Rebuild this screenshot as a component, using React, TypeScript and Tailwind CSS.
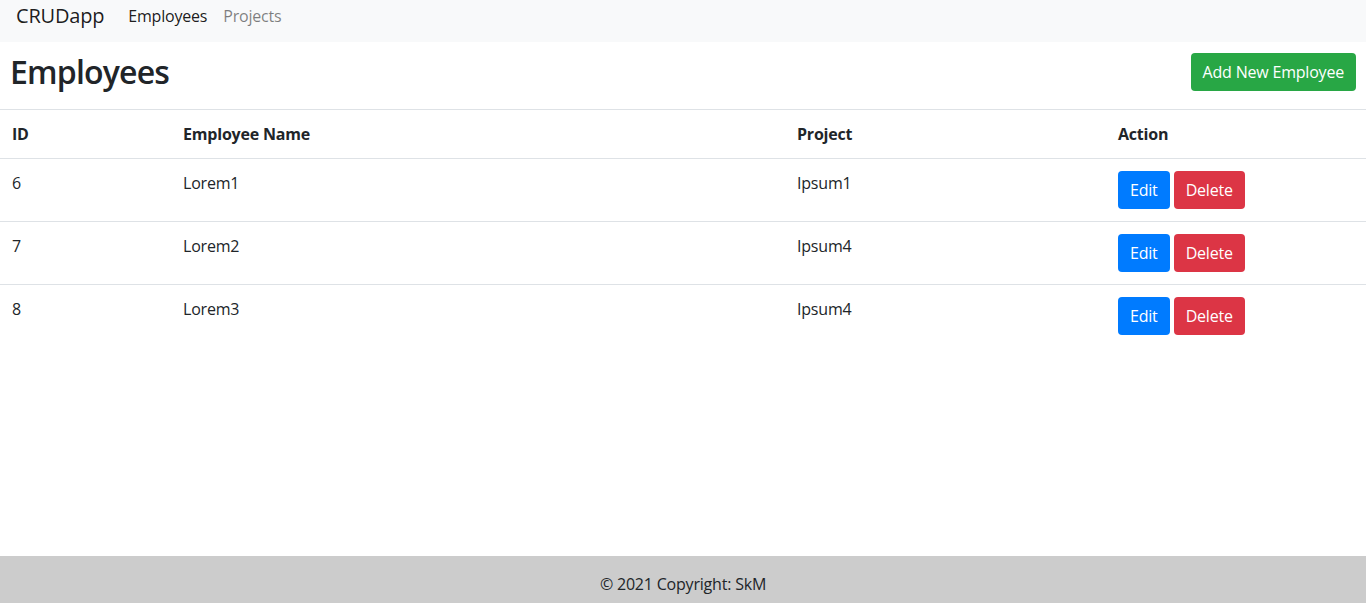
import React from "react";

interface Employee {
    id: number;
    name: string;
    project: string;
}

const employees: Employee[] = [
    { id: 6, name: "Lorem1", project: "Ipsum1" },
    { id: 7, name: "Lorem2", project: "Ipsum4" },
    { id: 8, name: "Lorem3", project: "Ipsum4" },
];

const App: React.FC = () => {
    return (
        <div
            className="min-h-screen flex flex-col bg-white text-[#212529] text-base leading-6 tracking-[-0.2px]"
            style={{ fontFamily: '"Open Sans", "Noto Sans", "Liberation Sans", sans-serif' }}
        >
            {/* navbar */}
            <nav className="h-[42px] bg-[#f8f9fa] flex items-start px-4 pt-px">
                <a className="text-xl leading-[30px] text-black/90 mr-4">CRUDapp</a>
                <a className="px-2 leading-[30px] text-black/90">Employees</a>
                <a className="px-2 leading-[30px] text-black/50">Projects</a>
            </nav>

            <main className="flex-1">
                <div className="flex items-start justify-between px-[10px] pt-[11px] pb-[18px]">
                    <h2 className="text-[32px] leading-[38px] font-semibold tracking-[-0.8px]">Employees</h2>
                    <button className="h-[38px] px-3 rounded bg-[#28a745] text-white">
                        Add New Employee
                    </button>
                </div>

                <table className="w-full border-collapse text-left">
                    <thead>
                        <tr className="border-t border-[#dee2e6]">
                            <th className="w-[171px] p-3 font-bold">ID</th>
                            <th className="w-[614px] p-3 font-bold">Employee Name</th>
                            <th className="w-[321px] p-3 font-bold">Project</th>
                            <th className="p-3 font-bold">Action</th>
                        </tr>
                    </thead>
                    <tbody>
                        {employees.map((emp) => (
                            <tr key={emp.id} className="border-t border-[#dee2e6] align-top">
                                <td className="p-3">{emp.id}</td>
                                <td className="p-3">{emp.name}</td>
                                <td className="p-3">{emp.project}</td>
                                <td className="p-3">
                                    <div className="flex gap-1">
                                        <button className="h-[38px] px-3 rounded bg-[#007bff] text-white">Edit</button>
                                        <button className="h-[38px] px-3 rounded bg-[#dc3545] text-white">Delete</button>
                                    </div>
                                </td>
                            </tr>
                        ))}
                    </tbody>
                </table>
            </main>

            <footer className="h-[47px] bg-[#cccccc] pt-4 text-center text-[#212529]">
                © 2021 Copyright: SkM
            </footer>
        </div>
    );
};

export default App;
